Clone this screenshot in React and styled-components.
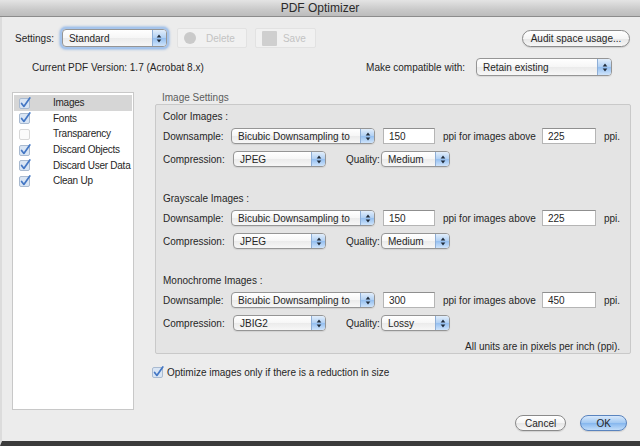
import styled, { createGlobalStyle } from 'styled-components';

const GlobalStyle = createGlobalStyle`
  html, body {
    margin: 0;
    padding: 0;
    background: #ececec;
  }
  body {
    font-family: "Liberation Sans", Arial, sans-serif;
    font-size: 10px;
    color: #262626;
  }
`;

const Window = styled.div`
  width: 640px;
  height: 446px;
  display: flex;
  flex-direction: column;
  overflow: hidden;
`;

const TitleBar = styled.div`
  height: 17px;
  flex: none;
  box-sizing: border-box;
  display: flex;
  align-items: center;
  justify-content: center;
  font-size: 12px;
  color: #2a2a2a;
  background: linear-gradient(#e4e4e4, #c9c9c9 60%, #bcbcbc);
  border-bottom: 1px solid #8c8c8c;
`;

const Body = styled.div`
  flex: 1;
  display: flex;
  flex-direction: column;
  box-sizing: border-box;
  padding: 11px 10px 10px 10px;
  background: #ececec;
  border-left: 2px solid #dcdcdc;
  border-bottom: 5px solid #3b3b3b;
`;

const Row = styled.div`
  display: flex;
  align-items: center;
  height: ${(p) => p.$h}px;
  margin-top: ${(p) => p.$mt || 0}px;
  flex: none;
`;

const Text = styled.span`
  margin-left: ${(p) => p.$ml || 0}px;
  margin-right: ${(p) => p.$mr || 0}px;
  white-space: nowrap;
`;

const Spacer = styled.div`
  flex: 1;
`;

const SelectBox = styled.div`
  display: flex;
  align-items: stretch;
  flex: none;
  box-sizing: border-box;
  width: ${(p) => p.$w}px;
  height: ${(p) => p.$h || 16}px;
  margin-left: ${(p) => p.$ml || 0}px;
  margin-right: ${(p) => p.$mr || 0}px;
  border: 1px solid #959595;
  border-radius: 4px;
  overflow: hidden;
  background: linear-gradient(#ffffff, #f6f6f6 50%, #ebebeb 52%, #f7f7f7);
  box-shadow: ${(p) =>
    p.$focus
      ? '0 0 0 2px #a5c4ec, 0 0 2px 3px rgba(120, 165, 225, 0.5)'
      : '0 1px 1px rgba(0, 0, 0, 0.08)'};
`;

const SelectText = styled.span`
  flex: 1;
  display: flex;
  align-items: center;
  padding-left: 6px;
  white-space: nowrap;
  overflow: hidden;
`;

const Stepper = styled.span`
  width: 13px;
  flex: none;
  display: flex;
  align-items: center;
  justify-content: center;
  border-left: 1px solid #8eaed6;
  background: linear-gradient(#e2eefb, #b2d1f4 48%, #94bff0 52%, #cfe4fb);
`;

const Arrows = () => (
  <svg width="6" height="9" viewBox="0 0 6 9">
    <path d="M3 0.5 L5.3 3.5 L0.7 3.5 Z" fill="#1f2b3a" />
    <path d="M3 8.5 L5.3 5.5 L0.7 5.5 Z" fill="#1f2b3a" />
  </svg>
);

const Select = ({ children, w, h, ml, mr, focus }) => (
  <SelectBox $w={w} $h={h} $ml={ml} $mr={mr} $focus={focus}>
    <SelectText>{children}</SelectText>
    <Stepper>
      <Arrows />
    </Stepper>
  </SelectBox>
);

const ToolButton = styled.div`
  display: flex;
  align-items: center;
  box-sizing: border-box;
  width: ${(p) => p.$w}px;
  height: 20px;
  margin-left: ${(p) => p.$ml}px;
  padding-left: 6px;
  gap: 6px;
  color: #c3c3c3;
  background: #f1f1f1;
  border: 1px solid #e2e2e2;
  border-radius: 2px;
`;

const GhostCircle = styled.span`
  width: 12px;
  height: 12px;
  border-radius: 50%;
  background: #cacaca;
  margin-right: 4px;
`;

const GhostSquare = styled.span`
  width: 15px;
  height: 15px;
  background: #cfcfcf;
  border-radius: 1px;
`;

const PillButton = styled.div`
  display: flex;
  align-items: center;
  justify-content: center;
  box-sizing: border-box;
  width: ${(p) => p.$w}px;
  height: ${(p) => p.$h || 16}px;
  margin-left: ${(p) => p.$ml || 0}px;
  border-radius: 9px;
  white-space: nowrap;
  border: 1px solid ${(p) => (p.$primary ? '#5a84be' : '#8a8a8a')};
  background: ${(p) =>
    p.$primary
      ? 'linear-gradient(#d7e8fb, #a3c9f2 48%, #86b7ee 52%, #c2ddf9)'
      : 'linear-gradient(#ffffff, #f5f5f5 50%, #e6e6e6 52%, #f7f7f7)'};
  box-shadow: 0 1px 1px rgba(0, 0, 0, 0.12);
`;

const Main = styled.div`
  flex: 1;
  display: flex;
  align-items: stretch;
  margin-top: 16px;
`;

const Sidebar = styled.div`
  width: 122px;
  height: 318px;
  flex: none;
  box-sizing: border-box;
  padding: 2px 1px;
  background: #ffffff;
  border: 1px solid #c8c8c8;
`;

const SideItem = styled.div`
  display: flex;
  align-items: center;
  height: 15.6px;
  padding-left: 5px;
  overflow: hidden;
  background: ${(p) => (p.$selected ? '#d6d6d6' : 'transparent')};

  svg {
    flex: none;
  }
`;

const SideLabel = styled.span`
  margin-left: 22px;
  white-space: nowrap;
  letter-spacing: -0.25px;
`;

const CheckBox = ({ checked }) => (
  <svg width="12" height="12" viewBox="0 0 12 12">
    <rect
      x="0.5"
      y="1.5"
      width="10"
      height="10"
      rx="1.5"
      fill={checked ? '#d9e5f4' : '#fbfbfb'}
      stroke={checked ? '#a9bad0' : '#d8d8d8'}
    />
    {checked && (
      <path
        d="M2.6 6.4 L4.9 9.4 L10.8 1"
        fill="none"
        stroke="#4477c4"
        strokeWidth="1.7"
        strokeLinecap="round"
        strokeLinejoin="round"
      />
    )}
  </svg>
);

const Content = styled.div`
  flex: 1;
  display: flex;
  flex-direction: column;
  margin-left: 18px;
`;

const GroupLabel = styled.div`
  height: 12px;
  line-height: 12px;
  margin-left: 10px;
  color: #5c5c5c;
`;

const GroupBox = styled.div`
  box-sizing: border-box;
  height: 250px;
  margin: 0 2px 0 3px;
  padding: 5px 10px 0 7px;
  background: #e4e4e4;
  border: 1px solid #c9c9c9;
  border-radius: 2px;
  display: flex;
  flex-direction: column;
`;

const Section = styled.div`
  display: flex;
  flex-direction: column;
  margin-bottom: 24px;
`;

const SectionTitle = styled.div`
  height: 14px;
  line-height: 14px;
  margin-bottom: 3px;
`;

const FieldRow = styled.div`
  display: flex;
  align-items: center;
  height: 18px;
  margin-bottom: ${(p) => p.$mb || 0}px;
`;

const FieldLabel = styled.span`
  width: ${(p) => p.$w}px;
  flex: none;
  white-space: nowrap;
`;

const NumberInput = styled.div`
  box-sizing: border-box;
  width: ${(p) => p.$w}px;
  height: 16px;
  margin: 0 8px;
  padding-left: 5px;
  display: flex;
  align-items: center;
  background: #ffffff;
  border: 1px solid #b5b5b5;
  border-top-color: #8f8f8f;
`;

const UnitsNote = styled.div`
  margin-top: -15px;
  text-align: right;
`;

const OptimizeRow = styled.div`
  display: flex;
  align-items: center;
  gap: 3px;
  margin-top: 11px;
  height: 14px;
`;

const ButtonBar = styled.div`
  display: flex;
  justify-content: flex-end;
  margin-top: auto;
  padding-right: 6px;
`;

const imageSections = [
  { title: 'Color Images :', ppi: '150', above: '225', compression: 'JPEG', quality: 'Medium' },
  { title: 'Grayscale Images :', ppi: '150', above: '225', compression: 'JPEG', quality: 'Medium' },
  { title: 'Monochrome Images :', ppi: '300', above: '450', compression: 'JBIG2', quality: 'Lossy' },
];

const panels = [
  { name: 'Images', checked: true, selected: true },
  { name: 'Fonts', checked: true },
  { name: 'Transparency', checked: false },
  { name: 'Discard Objects', checked: true },
  { name: 'Discard User Data', checked: true },
  { name: 'Clean Up', checked: true },
];

export default function App() {
  return (
    <>
      <GlobalStyle />
      <Window>
        <TitleBar>PDF Optimizer</TitleBar>
        <Body>
          <Row $h={20}>
            <Text $ml={3}>Settings:</Text>
            <Select w={105} h={18} ml={8} focus>
              Standard
            </Select>
            <ToolButton $w={70} $ml={10}>
              <GhostCircle />
              Delete
            </ToolButton>
            <ToolButton $w={61} $ml={8}>
              <GhostSquare />
              Save
            </ToolButton>
            <Spacer />
            <PillButton $w={108} $h={17}>Audit space usage...</PillButton>
          </Row>

          <Row $h={18} $mt={10}>
            <Text $ml={20}>Current PDF Version: 1.7 (Acrobat 8.x)</Text>
            <Spacer />
            <Text>Make compatible with:</Text>
            <Select w={136} h={18} ml={11} mr={18}>
              Retain existing
            </Select>
          </Row>

          <Main>
            <Sidebar>
              {panels.map((p) => (
                <SideItem key={p.name} $selected={p.selected}>
                  <CheckBox checked={p.checked} />
                  <SideLabel>{p.name}</SideLabel>
                </SideItem>
              ))}
            </Sidebar>

            <Content>
              <GroupLabel>Image Settings</GroupLabel>
              <GroupBox>
                {imageSections.map((s) => (
                  <Section key={s.title}>
                    <SectionTitle>{s.title}</SectionTitle>
                    <FieldRow $mb={5}>
                      <FieldLabel $w={68}>Downsample:</FieldLabel>
                      <Select w={144}>Bicubic Downsampling to</Select>
                      <NumberInput $w={52}>{s.ppi}</NumberInput>
                      <FieldLabel $w={91}>ppi for images above</FieldLabel>
                      <NumberInput $w={54}>{s.above}</NumberInput>
                      <Text>ppi.</Text>
                    </FieldRow>
                    <FieldRow>
                      <FieldLabel $w={70}>Compression:</FieldLabel>
                      <Select w={93} mr={20}>
                        {s.compression}
                      </Select>
                      <FieldLabel $w={35}>Quality:</FieldLabel>
                      <Select w={69}>{s.quality}</Select>
                    </FieldRow>
                  </Section>
                ))}
                <UnitsNote>All units are in pixels per inch (ppi).</UnitsNote>
              </GroupBox>

              <OptimizeRow>
                <CheckBox checked />
                <Text>Optimize images only if there is a reduction in size</Text>
              </OptimizeRow>

              <ButtonBar>
                <PillButton $w={51}>Cancel</PillButton>
                <PillButton $w={47} $ml={14} $primary>
                  OK
                </PillButton>
              </ButtonBar>
            </Content>
          </Main>
        </Body>
      </Window>
    </>
  );
}
